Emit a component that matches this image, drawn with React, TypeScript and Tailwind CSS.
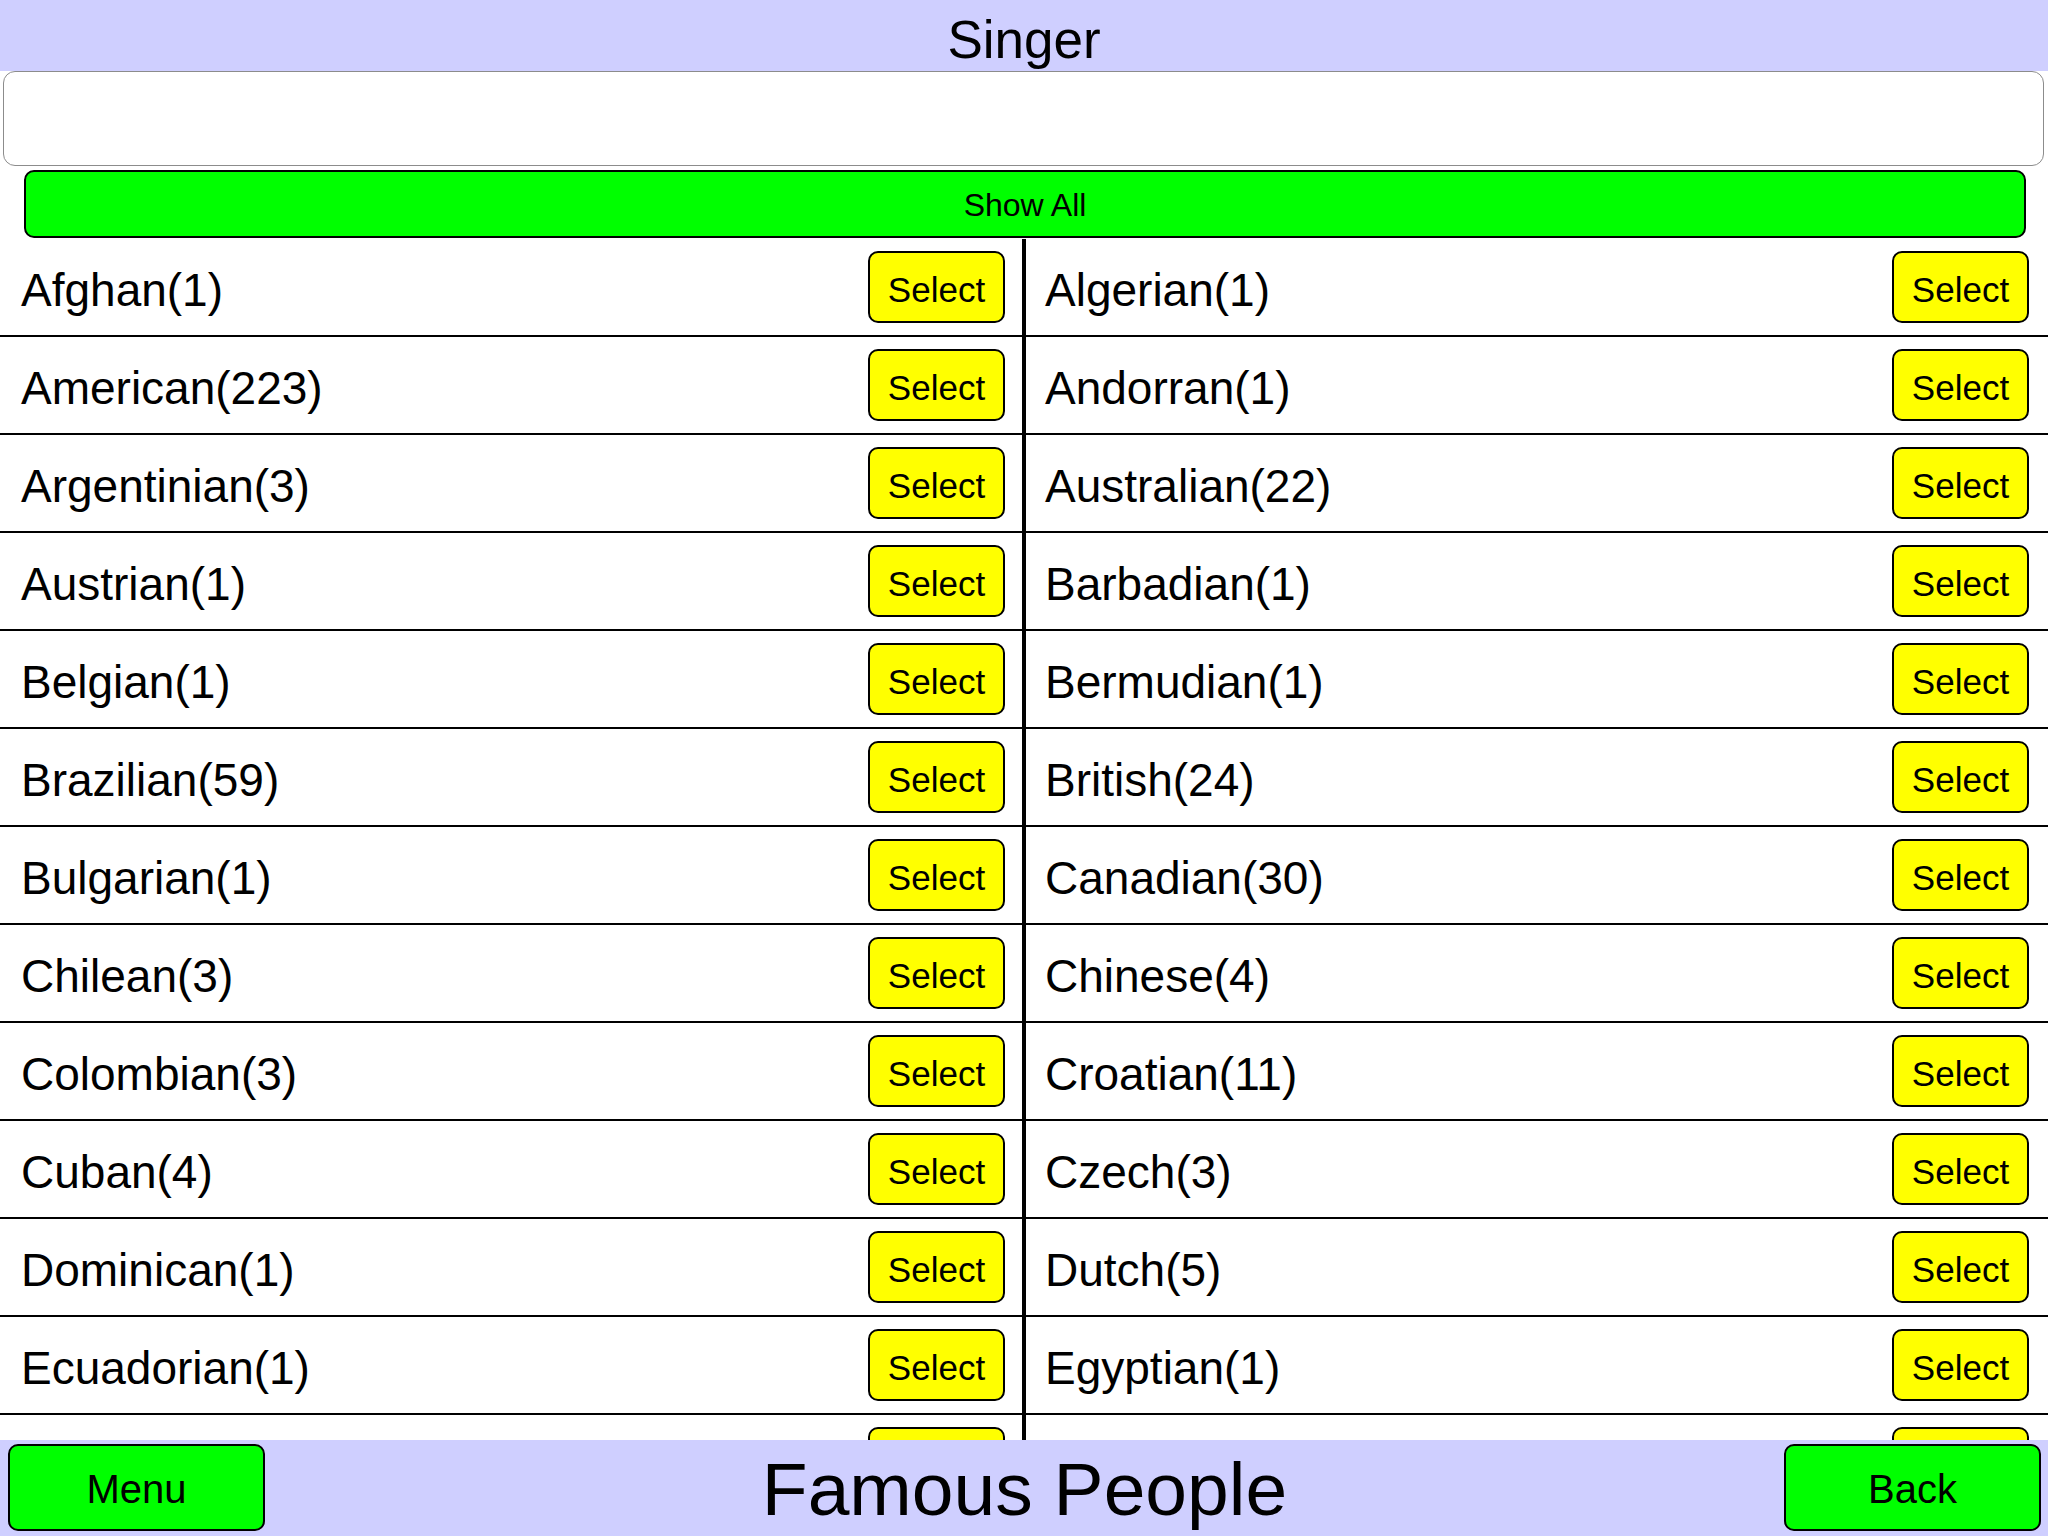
const leftItems = [
  'Afghan(1)',
  'American(223)',
  'Argentinian(3)',
  'Austrian(1)',
  'Belgian(1)',
  'Brazilian(59)',
  'Bulgarian(1)',
  'Chilean(3)',
  'Colombian(3)',
  'Cuban(4)',
  'Dominican(1)',
  'Ecuadorian(1)',
  '',
]

const rightItems = [
  'Algerian(1)',
  'Andorran(1)',
  'Australian(22)',
  'Barbadian(1)',
  'Bermudian(1)',
  'British(24)',
  'Canadian(30)',
  'Chinese(4)',
  'Croatian(11)',
  'Czech(3)',
  'Dutch(5)',
  'Egyptian(1)',
  '',
]

function Row({ label, side }: { label: string; side: 'left' | 'right' }) {
  return (
    <div
      className={
        side === 'left'
          ? 'flex items-center justify-between h-[98px] shrink-0 border-b-2 border-black pl-[21px] pr-[17px]'
          : 'flex items-center justify-between h-[98px] shrink-0 border-b-2 border-black pl-[19px] pr-[19px]'
      }
    >
      <span className="text-[46px] leading-none text-black pt-[5px]">{label}</span>
      <button className="w-[137px] h-[72px] rounded-[10px] border-2 border-black bg-[#ffff00] text-[35px] leading-none text-black pt-[4px]">
        {label ? 'Select' : ''}
      </button>
    </div>
  )
}

export default function App() {
  return (
    <div
      className="w-[2048px] h-[1536px] flex flex-col bg-white overflow-hidden"
      style={{ fontFamily: '"Liberation Sans", Arial, sans-serif' }}
    >
      <div className="h-[71px] shrink-0 bg-[#cfcfff] flex items-center justify-center pt-[8px]">
        <span className="text-[53px] leading-none text-black">Singer</span>
      </div>

      <input
        type="text"
        className="h-[95px] shrink-0 ml-[3px] mr-[4px] rounded-[12px] border-[1.5px] border-[#8c8c8c] bg-white outline-none px-4 text-[40px]"
      />

      <button className="h-[68px] shrink-0 mt-[4px] ml-[24px] mr-[22px] rounded-[10px] border-2 border-black bg-[#00ff00] text-[32px] leading-none text-black pt-[2px]">
        Show All
      </button>

      <div className="flex-1 flex mt-[1px] overflow-hidden">
        <div className="w-[1022px] shrink-0 flex flex-col">
          {leftItems.map((item, i) => (
            <Row key={i} label={item} side="left" />
          ))}
        </div>
        <div className="w-[4px] shrink-0 bg-black" />
        <div className="flex-1 flex flex-col">
          {rightItems.map((item, i) => (
            <Row key={i} label={item} side="right" />
          ))}
        </div>
      </div>

      <div className="h-[96px] shrink-0 bg-[#cfcfff] flex items-start pt-[4px]">
        <button className="w-[257px] h-[87px] ml-[8px] shrink-0 rounded-[10px] border-2 border-black bg-[#00ff00] text-[40px] leading-none text-black pt-[2px]">
          Menu
        </button>
        <div className="flex-1 h-[87px] flex items-center justify-center pt-[4px]">
          <span className="text-[75px] leading-none text-black">Famous People</span>
        </div>
        <button className="w-[257px] h-[87px] mr-[7px] shrink-0 rounded-[10px] border-2 border-black bg-[#00ff00] text-[40px] leading-none text-black pt-[2px]">
          Back
        </button>
      </div>
    </div>
  )
}
